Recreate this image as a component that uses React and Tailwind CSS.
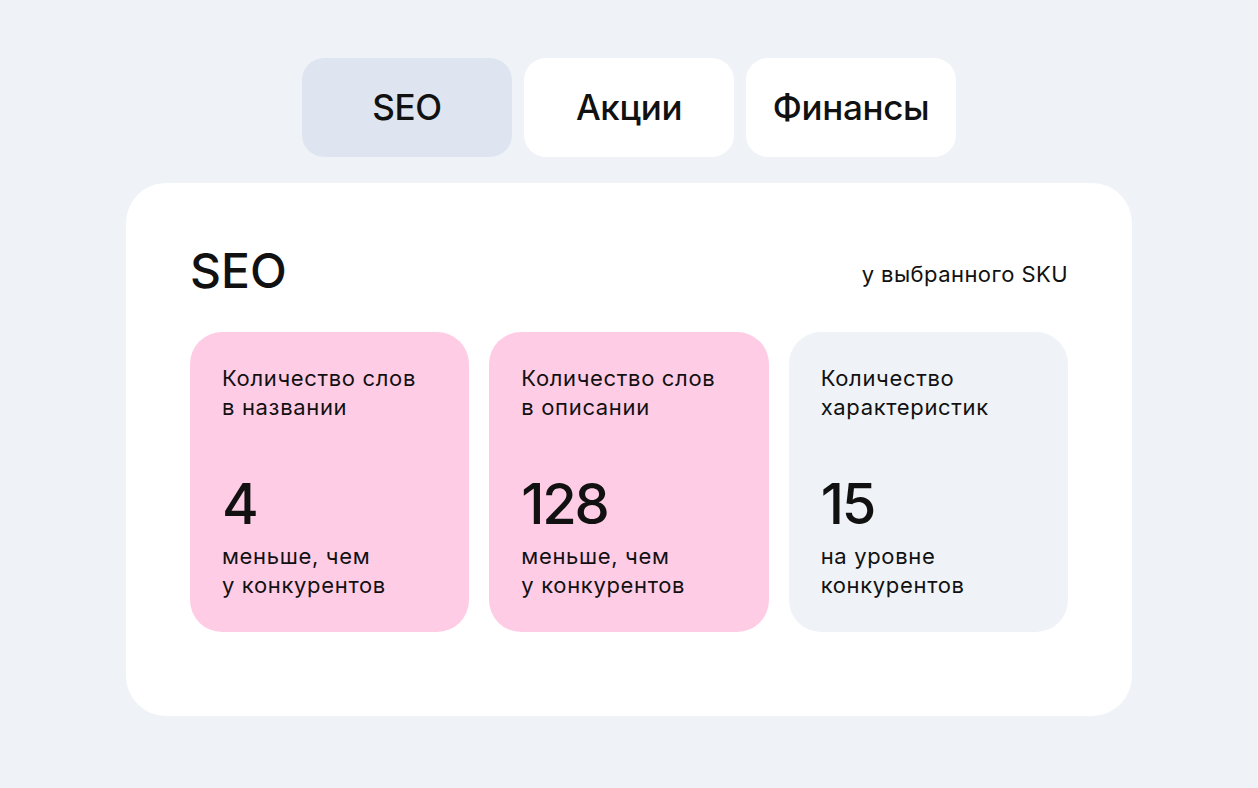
import React, { useState } from "react";

const tabs = ["SEO", "Акции", "Финансы"];

const stats = [
  {
    title: ["Количество слов", "в названии"],
    value: "4",
    note: ["меньше, чем", "у конкурентов"],
    bad: true,
  },
  {
    title: ["Количество слов", "в описании"],
    value: "128",
    note: ["меньше, чем", "у конкурентов"],
    bad: true,
  },
  {
    title: ["Количество", "характеристик"],
    value: "15",
    note: ["на уровне", "конкурентов"],
    bad: false,
  },
];

function StatCard({ item }) {
  return (
    <div
      className={`h-[300px] rounded-[32px] px-8 pt-[32px] pb-[32px] flex flex-col ${
        item.bad ? "bg-[#ffcce6]" : "bg-[#eff2f7]"
      }`}
    >
      <p className="text-[22px] leading-[29px] tracking-[0.03em]">
        {item.title[0]}
        <br />
        {item.title[1]}
      </p>
      <div className="mt-auto">
        <p className="text-[56px] leading-none font-medium tracking-[-0.04em] mb-[10px]">
          {item.value}
        </p>
        <p className="text-[22px] leading-[29px] tracking-[0.03em]">
          {item.note[0]}
          <br />
          {item.note[1]}
        </p>
      </div>
    </div>
  );
}

export default function App() {
  const [active, setActive] = useState(0);

  return (
    <div
      className="min-h-screen bg-[#eff2f7] text-[#111111] flex flex-col items-center pt-[58px]"
      style={{ fontFamily: "Inter, 'Noto Sans', sans-serif" }}
    >
      {/* tabs */}
      <div className="flex gap-3">
        {tabs.map((t, i) => (
          <button
            key={t}
            onClick={() => setActive(i)}
            className={`w-[210px] h-[99px] rounded-[22px] text-[35px] font-medium tracking-[-0.01em] ${
              active === i ? "bg-[#dfe5f0]" : "bg-white"
            }`}
          >
            {t}
          </button>
        ))}
      </div>

      <div className="mt-[26px] w-[1006px] bg-white rounded-[40px] px-16 pt-[64px] pb-[84px]">
        <div className="flex items-center justify-between">
          <h1 className="text-[48px] leading-none font-medium">SEO</h1>
          <span className="text-[22px] tracking-[0.02em] mt-[6px]">у выбранного SKU</span>
        </div>
        <div className="mt-[37px] grid grid-cols-3 gap-5">
          {stats.map((s, i) => (
            <StatCard key={i} item={s} />
          ))}
        </div>
      </div>
    </div>
  );
}
